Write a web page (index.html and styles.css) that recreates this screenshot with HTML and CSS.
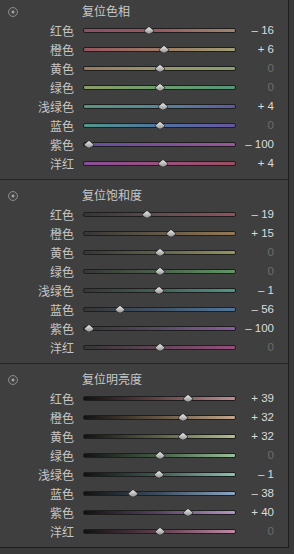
FILE: index.html
```html
<!DOCTYPE html>
<html lang="zh">
<head>
  <meta charset="UTF-8" />
  <meta name="viewport" content="width=device-width, initial-scale=1.0" />
  <title>HSL</title>
  <link rel="stylesheet" href="styles.css">
</head>
<body>
  <div class="panel">

    <section class="group">
      <div class="head head-top"><i class="reset"></i><span>复位色相</span></div>
      <div class="row"><span class="lbl">红色</span><div class="slider"><div class="track h-red"></div><i class="knob" style="--v:-16"></i></div><span class="val">– 16</span></div>
      <div class="row"><span class="lbl">橙色</span><div class="slider"><div class="track h-orange"></div><i class="knob" style="--v:6"></i></div><span class="val">+ 6</span></div>
      <div class="row"><span class="lbl">黄色</span><div class="slider"><div class="track h-yellow"></div><i class="knob" style="--v:0"></i></div><span class="val zero">0</span></div>
      <div class="row"><span class="lbl">绿色</span><div class="slider"><div class="track h-green"></div><i class="knob" style="--v:0"></i></div><span class="val zero">0</span></div>
      <div class="row"><span class="lbl">浅绿色</span><div class="slider"><div class="track h-aqua"></div><i class="knob" style="--v:4"></i></div><span class="val">+ 4</span></div>
      <div class="row"><span class="lbl">蓝色</span><div class="slider"><div class="track h-blue"></div><i class="knob" style="--v:0"></i></div><span class="val zero">0</span></div>
      <div class="row"><span class="lbl">紫色</span><div class="slider"><div class="track h-purple"></div><i class="knob" style="--v:-100"></i></div><span class="val">– 100</span></div>
      <div class="row"><span class="lbl">洋红</span><div class="slider"><div class="track h-magenta"></div><i class="knob" style="--v:4"></i></div><span class="val">+ 4</span></div>
    </section>

    <section class="group">
      <div class="head"><i class="reset"></i><span>复位饱和度</span></div>
      <div class="row"><span class="lbl">红色</span><div class="slider"><div class="track s-red"></div><i class="knob" style="--v:-19"></i></div><span class="val">– 19</span></div>
      <div class="row"><span class="lbl">橙色</span><div class="slider"><div class="track s-orange"></div><i class="knob" style="--v:15"></i></div><span class="val">+ 15</span></div>
      <div class="row"><span class="lbl">黄色</span><div class="slider"><div class="track s-yellow"></div><i class="knob" style="--v:0"></i></div><span class="val zero">0</span></div>
      <div class="row"><span class="lbl">绿色</span><div class="slider"><div class="track s-green"></div><i class="knob" style="--v:0"></i></div><span class="val zero">0</span></div>
      <div class="row"><span class="lbl">浅绿色</span><div class="slider"><div class="track s-aqua"></div><i class="knob" style="--v:-1"></i></div><span class="val">– 1</span></div>
      <div class="row"><span class="lbl">蓝色</span><div class="slider"><div class="track s-blue"></div><i class="knob" style="--v:-56"></i></div><span class="val">– 56</span></div>
      <div class="row"><span class="lbl">紫色</span><div class="slider"><div class="track s-purple"></div><i class="knob" style="--v:-100"></i></div><span class="val">– 100</span></div>
      <div class="row"><span class="lbl">洋红</span><div class="slider"><div class="track s-magenta"></div><i class="knob" style="--v:0"></i></div><span class="val zero">0</span></div>
    </section>

    <section class="group">
      <div class="head"><i class="reset"></i><span>复位明亮度</span></div>
      <div class="row"><span class="lbl">红色</span><div class="slider"><div class="track l-red"></div><i class="knob" style="--v:39"></i></div><span class="val">+ 39</span></div>
      <div class="row"><span class="lbl">橙色</span><div class="slider"><div class="track l-orange"></div><i class="knob" style="--v:32"></i></div><span class="val">+ 32</span></div>
      <div class="row"><span class="lbl">黄色</span><div class="slider"><div class="track l-yellow"></div><i class="knob" style="--v:32"></i></div><span class="val">+ 32</span></div>
      <div class="row"><span class="lbl">绿色</span><div class="slider"><div class="track l-green"></div><i class="knob" style="--v:0"></i></div><span class="val zero">0</span></div>
      <div class="row"><span class="lbl">浅绿色</span><div class="slider"><div class="track l-aqua"></div><i class="knob" style="--v:-1"></i></div><span class="val">– 1</span></div>
      <div class="row"><span class="lbl">蓝色</span><div class="slider"><div class="track l-blue"></div><i class="knob" style="--v:-38"></i></div><span class="val">– 38</span></div>
      <div class="row"><span class="lbl">紫色</span><div class="slider"><div class="track l-purple"></div><i class="knob" style="--v:40"></i></div><span class="val">+ 40</span></div>
      <div class="row"><span class="lbl">洋红</span><div class="slider"><div class="track l-magenta"></div><i class="knob" style="--v:0"></i></div><span class="val zero">0</span></div>
    </section>

  </div>
</body>
</html>
```

FILE: styles.css
```css
body { margin: 0; background: #393939; font-family: "Noto Sans CJK SC", "Noto Sans", sans-serif; }

.panel {
  width: 288px; background: #3f3f3f;
  border-right: 1px solid #1e1e1e; border-bottom: 1px solid #1e1e1e;
}
.group { padding-bottom: 6px; border-bottom: 1px solid #262626; }
.group:last-child { border-bottom: none; }

.head {
  display: flex; align-items: center;
  padding: 7px 0 2px; height: 16px;
  font-size: 12px; line-height: 16px; color: #c8c8c8;
}
.head-top { padding-top: 3px; }
.head span { margin-left: 64px; }
.reset {
  width: 8px; height: 8px; margin-left: 8px; margin-top: 1px;
  border: 1px solid #8c8c8c; border-radius: 50%;
  background: radial-gradient(circle, #a0a0a0 0 1.2px, #454545 1.8px);
}

.row {
  display: grid; grid-template-columns: 83px 153px 38px;
  height: 19px; align-items: center;
}
.lbl {
  padding-right: 9px; text-align: right;
  font-size: 12px; line-height: 19px; color: #c6c6c6;
}
.val {
  text-align: right; font: 11.5px/19px "Liberation Sans", Arial, sans-serif;
  color: #dcdcdc;
}
.val.zero { color: #6c6c6c; }

.slider { position: relative; height: 19px; display: flex; align-items: center; }
.track {
  width: 100%; height: 5px; box-sizing: border-box;
  border: 1px solid #1e1e1e; border-radius: 2px;
}
.knob {
  position: absolute; top: 50%; left: calc(77px + var(--v) * 0.71px);
  width: 9px; height: 9px; box-sizing: border-box;
  border: 1px solid #3a3a3a; border-radius: 0 35% 50% 35%;
  background: linear-gradient(135deg, #ececec, #b4b4b4 55%, #8a8a8a);
  transform: translate(-50%, -52%) scaleY(0.8) rotate(45deg);
}

/* hue */
.h-red     { background: linear-gradient(to right, #8e4e66, #9a5a5e, #a0866e); }
.h-orange  { background: linear-gradient(to right, #985660, #9c7a64, #a09e76); }
.h-yellow  { background: linear-gradient(to right, #9a7a60, #9a9868, #8aa06c); }
.h-green   { background: linear-gradient(to right, #8c9c6a, #6c9c6c, #56967a); }
.h-aqua    { background: linear-gradient(to right, #56987c, #548898, #5e58a2); }
.h-blue    { background: linear-gradient(to right, #50988e, #5074a0, #6656a2); }
.h-purple  { background: linear-gradient(to right, #624e9c, #7e4e9e, #9a5696); }
.h-magenta { background: linear-gradient(to right, #884e98, #98507e, #9c4e62); }

/* saturation */
.s-red     { background: linear-gradient(to right, #363636, #624c50, #925260); }
.s-orange  { background: linear-gradient(to right, #363636, #625848, #967856); }
.s-yellow  { background: linear-gradient(to right, #363636, #60624a, #949858); }
.s-green   { background: linear-gradient(to right, #363636, #4c604e, #609862); }
.s-aqua    { background: linear-gradient(to right, #363636, #426258, #4e9886); }
.s-blue    { background: linear-gradient(to right, #363636, #42546a, #50789c); }
.s-purple  { background: linear-gradient(to right, #363636, #584c64, #8a5ca0); }
.s-magenta { background: linear-gradient(to right, #363636, #624656, #964e7e); }

/* luminance */
.l-red     { background: linear-gradient(to right, #121212, #664446, #c08e94); }
.l-orange  { background: linear-gradient(to right, #121212, #645644, #c2a68c); }
.l-yellow  { background: linear-gradient(to right, #121212, #5c6244, #b4be8e); }
.l-green   { background: linear-gradient(to right, #121212, #465e46, #98c09a); }
.l-aqua    { background: linear-gradient(to right, #121212, #3e5c54, #8cc2b2); }
.l-blue    { background: linear-gradient(to right, #121212, #3e4e60, #8ca6c2); }
.l-purple  { background: linear-gradient(to right, #121212, #584262, #b496c2); }
.l-magenta { background: linear-gradient(to right, #121212, #5e404e, #c08aa4); }
```
